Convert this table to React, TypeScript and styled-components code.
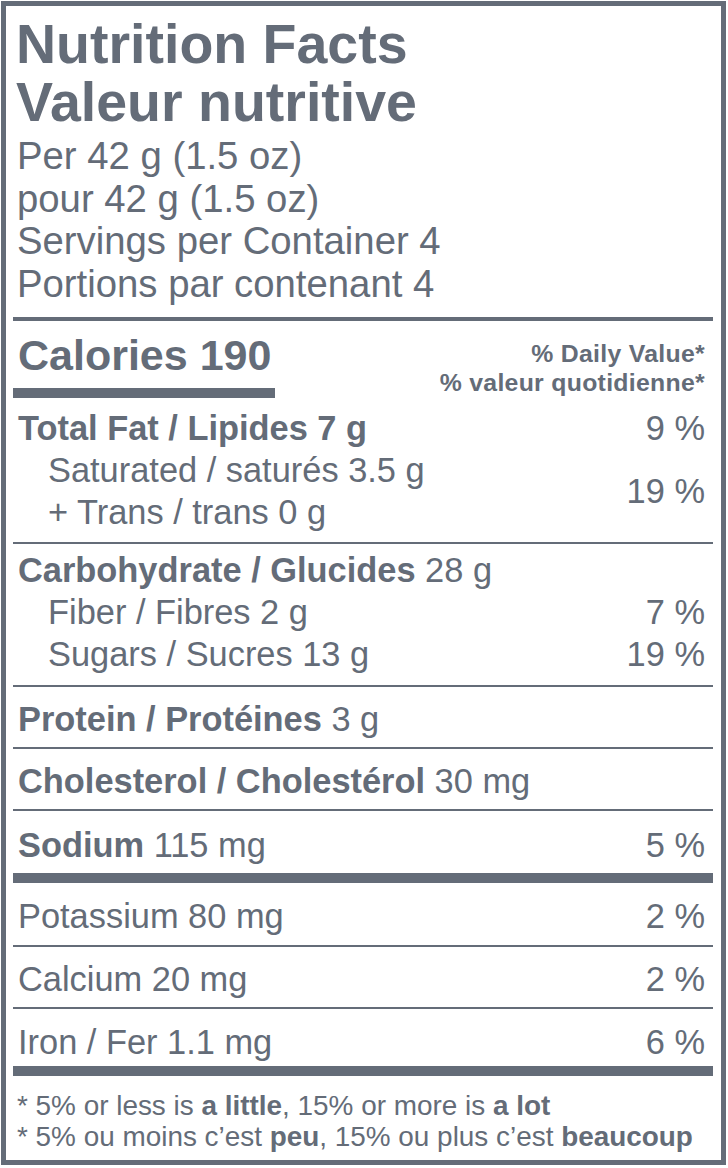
import styled, { createGlobalStyle } from "styled-components";

const ink = "#646c78";

const GlobalStyle = createGlobalStyle`
  body {
    margin: 1px 0 0 1px;
    background: #ffffff;
    font-family: "Liberation Sans", Arial, sans-serif;
    color: ${ink};
  }
`;

const Label = styled.div`
  width: 725px;
  box-sizing: border-box;
  border: 5px solid ${ink};
  padding: 0 8px 8px 7px;
`;

// a block of the label closed by a rule of given thickness
const Section = styled.div<{ $rule?: number; $pt?: number; $pb?: number }>`
  border-bottom: ${(p) => p.$rule ?? 0}px solid ${ink};
  padding-top: ${(p) => p.$pt ?? 0}px;
  padding-bottom: ${(p) => p.$pb ?? 0}px;
`;

const Title = styled.h1`
  margin: 0;
  padding-left: 3px;
  font-size: 55.5px;
  line-height: 58px;
  font-weight: 700;
`;

const Serving = styled.div`
  margin-top: 4px;
  padding-left: 4px;
  font-size: 38.3px;
  line-height: 42.5px;
`;

const CalRow = styled.div`
  display: flex;
  justify-content: space-between;
  align-items: flex-start;
`;

const Calories = styled.div`
  padding: 10px 0 0 5px;
  font-size: 43px;
  line-height: 48px;
  font-weight: 700;
`;

const CalBar = styled.div`
  width: 262px;
  height: 10px;
  margin-top: 9px;
  background: ${ink};
`;

const DVHeader = styled.div`
  padding: 18px 8px 0 0;
  text-align: right;
  font-size: 24.8px;
  line-height: 29px;
  font-weight: 700;
  letter-spacing: 0.3px;
`;

const Row = styled.div<{ $indent?: number; $pt?: number; $pb?: number }>`
  display: flex;
  justify-content: space-between;
  align-items: center;
  padding: ${(p) => p.$pt ?? 0}px 8px ${(p) => p.$pb ?? 0}px ${(p) => 5 + (p.$indent ?? 0)}px;
  font-size: 34.4px;
  line-height: 42px;
`;

const Lines = styled.div`
  display: flex;
  flex-direction: column;
`;

const B = styled.b`
  font-weight: 700;
`;

const Footnote = styled.div`
  padding: 14px 0 0 4px;
  font-size: 27.9px;
  line-height: 31px;
`;

type Single = { bold: string; rest?: string; dv?: string; pt: number; pb: number; rule: number };

const singles: Single[] = [
  { bold: "Protein / Protéines", rest: " 3 g", pt: 11, pb: 7, rule: 2 },
  { bold: "Cholesterol / Cholestérol", rest: " 30 mg", pt: 11, pb: 7, rule: 2 },
  { bold: "Sodium", rest: " 115 mg", dv: "5 %", pt: 13, pb: 7, rule: 10 },
  { bold: "", rest: "Potassium 80 mg", dv: "2 %", pt: 12, pb: 8, rule: 2 },
  { bold: "", rest: "Calcium 20 mg", dv: "2 %", pt: 11, pb: 7, rule: 2 },
  { bold: "", rest: "Iron / Fer 1.1 mg", dv: "6 %", pt: 12, pb: 3, rule: 10 },
];

export default function App() {
  return (
    <>
      <GlobalStyle />
      <Label>
        <Section $rule={4} $pt={9} $pb={12}>
          <Title>
            Nutrition Facts
            <br />
            Valeur nutritive
          </Title>
          <Serving>
            Per 42 g (1.5 oz)
            <br />
            pour 42 g (1.5 oz)
            <br />
            Servings per Container 4
            <br />
            Portions par contenant 4
          </Serving>
        </Section>

        <Section $rule={2} $pb={9}>
          <CalRow>
            <div>
              <Calories>Calories 190</Calories>
              <CalBar />
            </div>
            <DVHeader>
              % Daily Value*
              <br />% valeur quotidienne*
            </DVHeader>
          </CalRow>
          <Row $pt={9}>
            <span>
              <B>Total Fat / Lipides 7 g</B>
            </span>
            <span>9 %</span>
          </Row>
          <Row $indent={30}>
            <Lines>
              <span>Saturated / saturés 3.5 g</span>
              <span>+ Trans / trans 0 g</span>
            </Lines>
            <span>19 %</span>
          </Row>
        </Section>

        <Section $rule={2} $pt={5} $pb={10}>
          <Row>
            <span>
              <B>Carbohydrate / Glucides</B> 28 g
            </span>
          </Row>
          <Row $indent={30}>
            <span>Fiber / Fibres 2 g</span>
            <span>7 %</span>
          </Row>
          <Row $indent={30}>
            <span>Sugars / Sucres 13 g</span>
            <span>19 %</span>
          </Row>
        </Section>

        {singles.map((s, i) => (
          <Section key={i} $rule={s.rule}>
            <Row $pt={s.pt} $pb={s.pb}>
              <span>
                {s.bold && <B>{s.bold}</B>}
                {s.rest}
              </span>
              {s.dv && <span>{s.dv}</span>}
            </Row>
          </Section>
        ))}

        <Footnote>
          * 5% or less is <B>a little</B>, 15% or more is <B>a lot</B>
          <br />* 5% ou moins c’est <B>peu</B>, 15% ou plus c’est <B>beaucoup</B>
        </Footnote>
      </Label>
    </>
  );
}
